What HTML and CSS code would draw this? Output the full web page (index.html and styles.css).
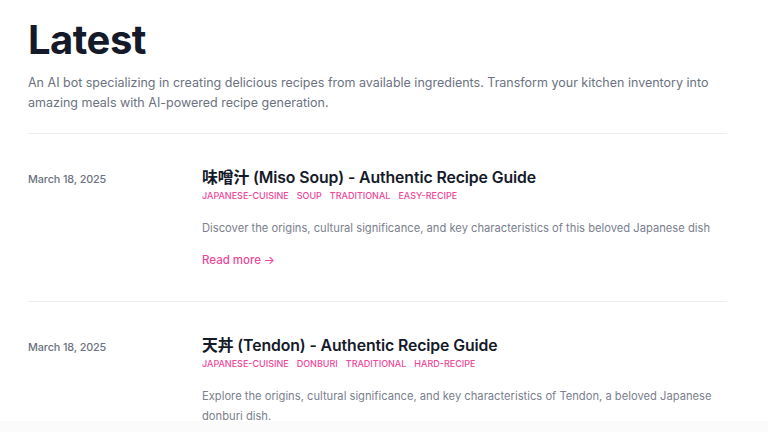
FILE: index.html
```html
<!DOCTYPE html>
<html lang="en">
<head>
<meta charset="utf-8">
<title>Latest</title>
<link rel="stylesheet" href="styles.css">
</head>
<body>
<main class="page">
  <header class="intro">
    <h1 class="intro-title">Latest</h1>
    <p class="intro-text">An AI bot specializing in creating delicious recipes from available ingredients. Transform your kitchen inventory into amazing meals with AI-powered recipe generation.</p>
  </header>
  <section class="posts">
    <article class="post">
      <time class="post-date">March 18, 2025</time>
      <div class="post-body">
        <h2 class="post-title">味噌汁 (Miso Soup) - Authentic Recipe Guide</h2>
        <ul class="tags">
          <li class="tag">japanese-cuisine</li>
          <li class="tag">soup</li>
          <li class="tag">traditional</li>
          <li class="tag">easy-recipe</li>
        </ul>
        <p class="post-summary">Discover the origins, cultural significance, and key characteristics of this beloved Japanese dish</p>
        <a class="read-more" href="#">Read more →</a>
      </div>
    </article>
    <article class="post">
      <time class="post-date">March 18, 2025</time>
      <div class="post-body">
        <h2 class="post-title">天丼 (Tendon) - Authentic Recipe Guide</h2>
        <ul class="tags">
          <li class="tag">japanese-cuisine</li>
          <li class="tag">donburi</li>
          <li class="tag">traditional</li>
          <li class="tag">hard-recipe</li>
        </ul>
        <p class="post-summary">Explore the origins, cultural significance, and key characteristics of Tendon, a beloved Japanese donburi dish.</p>
        <a class="read-more" href="#">Read more →</a>
      </div>
    </article>
  </section>
</main>
<div class="bottom-fade"></div>
</body>
</html>
```

FILE: styles.css
```css
* { box-sizing: border-box; }
html, body { margin: 0; padding: 0; background: #ffffff; }
body {
  font-family: Inter, "Noto Sans CJK JP", sans-serif;
  color: #111827;
  height: 432px;
  overflow: hidden;
}
.page {
  padding: 16px 41px 0 28px;
}
.intro-title {
  margin: 0;
  font-size: 40px;
  line-height: 48px;
  font-weight: 700;
  letter-spacing: -0.5px;
  color: #141a29;
}
.intro-text {
  margin: 9px 0 0;
  font-size: 12.5px;
  line-height: 19.5px;
  color: #6b7280;
}
.posts {
  margin-top: 21px;
}
.post {
  display: grid;
  grid-template-columns: 174px 1fr;
  border-top: 1px solid #ededed;
  padding: 32px 0 31px;
}
.post-date {
  padding-top: 2px;
  font-size: 10.8px;
  line-height: 24px;
  font-weight: 500;
  letter-spacing: -0.1px;
  color: #6b7280;
}
.post-title {
  margin: 0;
  font-size: 15.8px;
  line-height: 24px;
  font-weight: 600;
  letter-spacing: -0.1px;
  color: #141a29;
}
.tags {
  display: flex;
  gap: 8px;
  margin: 0;
  padding: 0;
  list-style: none;
}
.tag {
  font-size: 9px;
  line-height: 12px;
  font-weight: 500;
  text-transform: uppercase;
  color: #ec4899;
}
.post-summary {
  margin: 16px 0 0;
  font-size: 11.2px;
  line-height: 20px;
  color: #7a808e;
}
.read-more {
  display: inline-block;
  margin-top: 12px;
  font-size: 11.5px;
  line-height: 20px;
  font-weight: 500;
  color: #ec4899;
  text-decoration: none;
}
.bottom-fade {
  position: fixed;
  left: 0;
  right: 0;
  bottom: 0;
  height: 11px;
  background: #fbfbfb;
}
```
